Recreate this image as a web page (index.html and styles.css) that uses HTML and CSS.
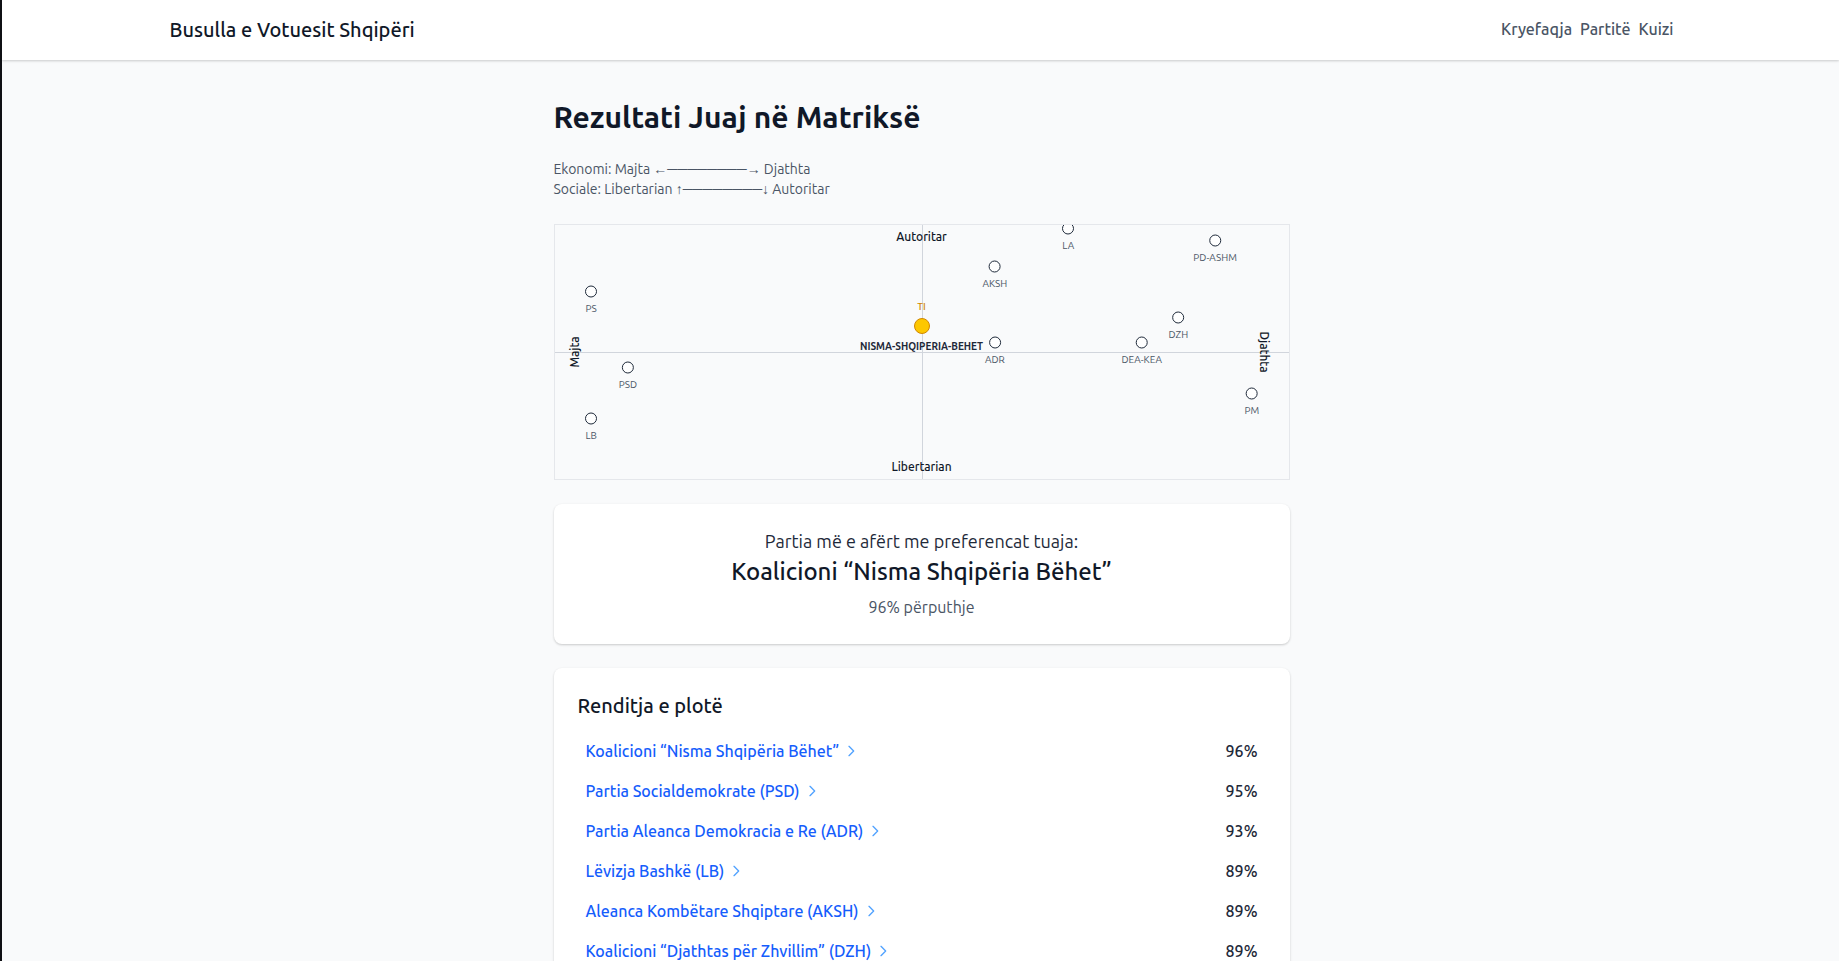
FILE: index.html
```html
<!DOCTYPE html>
<html lang="sq">
<head>
    <meta charset="UTF-8">
    <meta name="viewport" content="width=device-width, initial-scale=1.0">
    <title>Busulla e Votuesit Shqipëri</title>
    <link rel="stylesheet" href="styles.css">
</head>
<body>
    <header class="site-header">
        <div class="header-inner">
            <a class="brand" href="#">Busulla e Votuesit Shqipëri</a>
            <nav class="site-nav">
                <a href="#">Kryefaqja</a>
                <a href="#">Partitë</a>
                <a href="#">Kuizi</a>
            </nav>
        </div>
    </header>

    <main class="results">
        <h1>Rezultati Juaj në Matriksë</h1>

        <div class="legend">
            <p>Ekonomi: Majta ←────────→ Djathta</p>
            <p>Sociale: Libertarian ↑────────↓ Autoritar</p>
        </div>

        <div class="matrix">
            <div class="axis axis-x"></div>
            <div class="axis axis-y"></div>
            <span class="axis-label top">Autoritar</span>
            <span class="axis-label bottom">Libertarian</span>
            <span class="axis-label left">Majta</span>
            <span class="axis-label right">Djathta</span>

            <div class="party" style="left: 5%; top: 30%"><i class="dot"></i><span>PS</span></div>
            <div class="party" style="left: 10%; top: 60%"><i class="dot"></i><span>PSD</span></div>
            <div class="party" style="left: 5%; top: 80%"><i class="dot"></i><span>LB</span></div>
            <div class="party" style="left: 60%; top: 20%"><i class="dot"></i><span>AKSH</span></div>
            <div class="party" style="left: 70%; top: 5%"><i class="dot"></i><span>LA</span></div>
            <div class="party" style="left: 90%; top: 10%"><i class="dot"></i><span>PD-ASHM</span></div>
            <div class="party" style="left: 60%; top: 50%"><i class="dot"></i><span>ADR</span></div>
            <div class="party" style="left: 80%; top: 50%"><i class="dot"></i><span>DEA-KEA</span></div>
            <div class="party" style="left: 85%; top: 40%"><i class="dot"></i><span>DZH</span></div>
            <div class="party" style="left: 95%; top: 70%"><i class="dot"></i><span>PM</span></div>
            <div class="party closest" style="left: 50%; top: 45%"><i class="dot"></i><span>NISMA-SHQIPERIA-BEHET</span></div>
            <div class="party user" style="left: 50%; top: 36%"><span>TI</span><i class="dot"></i></div>
        </div>

        <section class="card match">
            <p class="match-intro">Partia më e afërt me preferencat tuaja:</p>
            <h2 class="match-name">Koalicioni “Nisma Shqipëria Bëhet”</h2>
            <p class="match-score">96% përputhje</p>
        </section>

        <section class="card">
            <h2 class="ranking-title">Renditja e plotë</h2>
            <ul class="ranking">
                <li>
                    <a href="#">Koalicioni “Nisma Shqipëria Bëhet” <svg class="chevron" viewBox="0 0 24 24"><path d="M9 5l7 7-7 7"/></svg></a>
                    <span class="percent">96%</span>
                </li>
                <li>
                    <a href="#">Partia Socialdemokrate (PSD) <svg class="chevron" viewBox="0 0 24 24"><path d="M9 5l7 7-7 7"/></svg></a>
                    <span class="percent">95%</span>
                </li>
                <li>
                    <a href="#">Partia Aleanca Demokracia e Re (ADR) <svg class="chevron" viewBox="0 0 24 24"><path d="M9 5l7 7-7 7"/></svg></a>
                    <span class="percent">93%</span>
                </li>
                <li>
                    <a href="#">Lëvizja Bashkë (LB) <svg class="chevron" viewBox="0 0 24 24"><path d="M9 5l7 7-7 7"/></svg></a>
                    <span class="percent">89%</span>
                </li>
                <li>
                    <a href="#">Aleanca Kombëtare Shqiptare (AKSH) <svg class="chevron" viewBox="0 0 24 24"><path d="M9 5l7 7-7 7"/></svg></a>
                    <span class="percent">89%</span>
                </li>
                <li>
                    <a href="#">Koalicioni “Djathtas për Zhvillim” (DZH) <svg class="chevron" viewBox="0 0 24 24"><path d="M9 5l7 7-7 7"/></svg></a>
                    <span class="percent">89%</span>
                </li>
            </ul>
        </section>
    </main>
</body>
</html>
```
FILE: styles.css
```css
* {
    box-sizing: border-box;
    margin: 0;
    padding: 0;
}

/* no scrollbar gutter */
html {
    scrollbar-width: none;
}

body {
    min-height: 100vh;
    border-left: 2px solid #0f1014;
    background-color: #f9fafb;
    color: #101828;
    font-family: "Ubuntu", "Noto Sans", sans-serif;
    font-size: 16px;
    line-height: 24px;
}

a {
    text-decoration: none;
}

.site-header {
    padding-left: 2px;
    background-color: #fff;
    box-shadow: 0 1px 3px rgba(0, 0, 0, 0.1), 0 1px 2px rgba(0, 0, 0, 0.1);
}

.header-inner {
    display: flex;
    align-items: center;
    justify-content: space-between;
    max-width: 1536px;
    margin: 0 auto;
    padding: 16px;
}

.brand {
    color: #101828;
    font-size: 20px;
    font-weight: 500;
    line-height: 28px;
}

.site-nav {
    display: flex;
    gap: 8px;
    padding-bottom: 2px;
}

.site-nav a {
    color: #4a5565;
    font-weight: 500;
}

.results {
    display: flex;
    flex-direction: column;
    gap: 24px;
    max-width: 770px;
    margin: 0 auto;
    padding: 39px 16px 39px 18px;
}

h1 {
    font-size: 30px;
    font-weight: 700;
    line-height: 36px;
}

.legend {
    padding-bottom: 1px;
    color: #4a5565;
    font-size: 14px;
    line-height: 20px;
}

/* matrix */
.matrix {
    position: relative;
    height: 256px;
    overflow: hidden;
    border: 1px solid #e5e7eb;
}

.axis {
    position: absolute;
    background-color: #d1d5dc;
}

.axis-x {
    top: 50%;
    left: 0;
    width: 100%;
    height: 1px;
}

.axis-y {
    top: 0;
    left: 50%;
    width: 1px;
    height: 100%;
}

.axis-label {
    position: absolute;
    font-size: 12px;
    font-weight: 500;
    line-height: 16px;
}

.axis-label.top {
    top: 4px;
    left: 50%;
    transform: translateX(-50%);
}

.axis-label.bottom {
    bottom: 4px;
    left: 50%;
    transform: translateX(-50%);
}

.axis-label.left {
    top: 50%;
    left: 20px;
    transform: translate(-50%, -50%) rotate(-90deg);
}

.axis-label.right {
    top: 50%;
    right: 24px;
    transform: translate(50%, -50%) rotate(90deg);
}

.party {
    position: absolute;
    display: flex;
    flex-direction: column;
    align-items: center;
    gap: 2px;
    color: #4a5565;
    font-size: 10px;
    line-height: 17px;
    white-space: nowrap;
    transform: translate(-50%, -50%);
}

.dot {
    width: 12px;
    height: 12px;
    border: 1px solid #1e2939;
    border-radius: 50%;
    background-color: #fff;
}

.closest {
    color: #1e2939;
    font-weight: 700;
}

/* the user marker covers it */
.closest .dot {
    visibility: hidden;
}

.user {
    gap: 3px;
    color: #d08700;
    font-weight: 500;
}

.user .dot {
    width: 16px;
    height: 16px;
    border-color: #d08700;
    background-color: #fdc700;
}

/* cards */
.card {
    padding: 24px;
    border-radius: 8px;
    background-color: #fff;
    box-shadow: 0 1px 3px rgba(0, 0, 0, 0.1), 0 1px 2px rgba(0, 0, 0, 0.1);
}

.match {
    text-align: center;
}

.match-intro {
    margin-bottom: 2px;
    color: #1e2939;
    font-size: 18px;
    line-height: 26px;
}

.match-name {
    font-size: 24px;
    font-weight: 500;
    line-height: 32px;
}

.match-score {
    padding: 7px 0 1px;
    color: #4a5565;
}

.ranking-title {
    margin-bottom: 12px;
    font-size: 20px;
    font-weight: 500;
    line-height: 28px;
}

.ranking {
    list-style: none;
}

.ranking li {
    display: flex;
    align-items: center;
    justify-content: space-between;
    padding: 7px 8px 9px;
}

.ranking a {
    display: flex;
    align-items: center;
    gap: 4px;
    color: #155dfc;
    font-weight: 500;
}

.chevron {
    width: 16px;
    height: 16px;
    fill: none;
    stroke: #51a2ff;
    stroke-width: 2;
    stroke-linecap: round;
    stroke-linejoin: round;
}

.percent {
    color: #1e2939;
    font-weight: 500;
}
```
